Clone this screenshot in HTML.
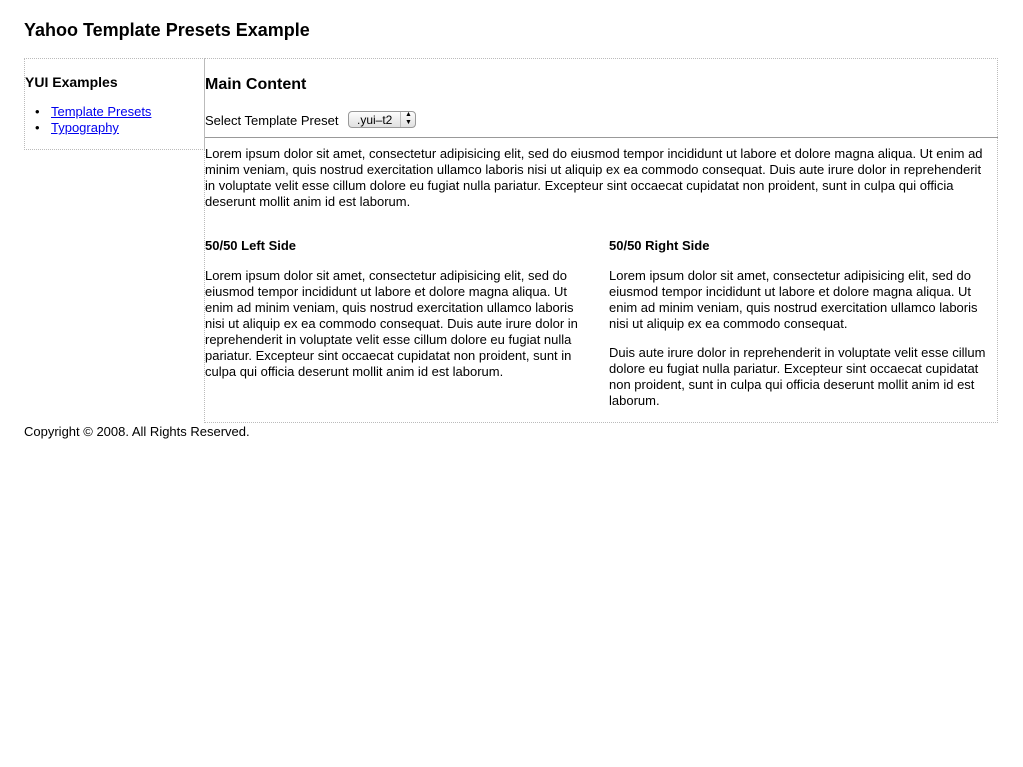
<!DOCTYPE html>
<html><head><meta charset="utf-8"><style>
body{margin:0;background:#fff;font-family:"Liberation Sans",Arial,sans-serif;font-size:13px;line-height:16px;color:#000;}
.a{position:absolute;}
h1,h2,h3,p{margin:0}
a{color:#00e}
.box{position:absolute;border:1px dotted #bbb;}
.sel{position:absolute;left:348px;top:111px;width:68px;height:17px;border:1px solid #999;border-radius:4px;background:linear-gradient(#fdfdfd,#e0e0e0);font-size:12px;line-height:17px;box-sizing:border-box;}
</style></head><body>
<div class="a" style="left:24px;top:19px;font-size:18px;line-height:22px;font-weight:bold">Yahoo Template Presets Example</div>
<div class="box" style="left:24px;top:58px;width:179px;height:90px"></div>
<div class="box" style="left:204px;top:58px;width:792px;height:363px"></div>
<div class="a" style="left:25px;top:73px;font-size:14px;line-height:18px;font-weight:bold">YUI Examples</div>
<div class="a" style="left:35px;top:104px">&bull;</div>
<div class="a" style="left:35px;top:120px">&bull;</div>
<div class="a" style="left:51px;top:104px"><a href="#">Template Presets</a><br><a href="#">Typography</a></div>
<div class="a" style="left:205px;top:75px;font-size:16px;line-height:20px;font-weight:bold">Main Content</div>
<div class="a" style="left:205px;top:113px">Select Template Preset</div>
<div class="sel"><span style="position:absolute;left:8px;top:0">.yui–t2</span><span style="position:absolute;left:51px;top:0;height:15px;border-left:1px solid #bbb"></span><span style="position:absolute;left:56px;top:-1px;font-size:7px;line-height:8px">▲<br>▼</span></div>
<div class="a" style="left:205px;top:137px;width:793px;height:1px;background:#999"></div>
<div class="a" style="left:205px;top:146px;width:783px">Lorem ipsum dolor sit amet, consectetur adipisicing elit, sed do eiusmod tempor incididunt ut labore et dolore magna aliqua. Ut enim ad minim veniam, quis nostrud exercitation ullamco laboris nisi ut aliquip ex ea commodo consequat. Duis aute irure dolor in reprehenderit in voluptate velit esse cillum dolore eu fugiat nulla pariatur. Excepteur sint occaecat cupidatat non proident, sunt in culpa qui officia deserunt mollit anim id est laborum.</div>
<div class="a" style="left:205px;top:238px;font-weight:bold">50/50 Left Side</div>
<div class="a" style="left:205px;top:268px;width:385px">Lorem ipsum dolor sit amet, consectetur adipisicing elit, sed do eiusmod tempor incididunt ut labore et dolore magna aliqua. Ut enim ad minim veniam, quis nostrud exercitation ullamco laboris nisi ut aliquip ex ea commodo consequat. Duis aute irure dolor in reprehenderit in voluptate velit esse cillum dolore eu fugiat nulla pariatur. Excepteur sint occaecat cupidatat non proident, sunt in culpa qui officia deserunt mollit anim id est laborum.</div>
<div class="a" style="left:609px;top:238px;font-weight:bold">50/50 Right Side</div>
<div class="a" style="left:609px;top:268px;width:385px">Lorem ipsum dolor sit amet, consectetur adipisicing elit, sed do eiusmod tempor incididunt ut labore et dolore magna aliqua. Ut enim ad minim veniam, quis nostrud exercitation ullamco laboris nisi ut aliquip ex ea commodo consequat.<p style="margin-top:13px">Duis aute irure dolor in reprehenderit in voluptate velit esse cillum dolore eu fugiat nulla pariatur. Excepteur sint occaecat cupidatat non proident, sunt in culpa qui officia deserunt mollit anim id est laborum.</p></div>
<div class="a" style="left:24px;top:424px">Copyright © 2008. All Rights Reserved.</div>
</body></html>
